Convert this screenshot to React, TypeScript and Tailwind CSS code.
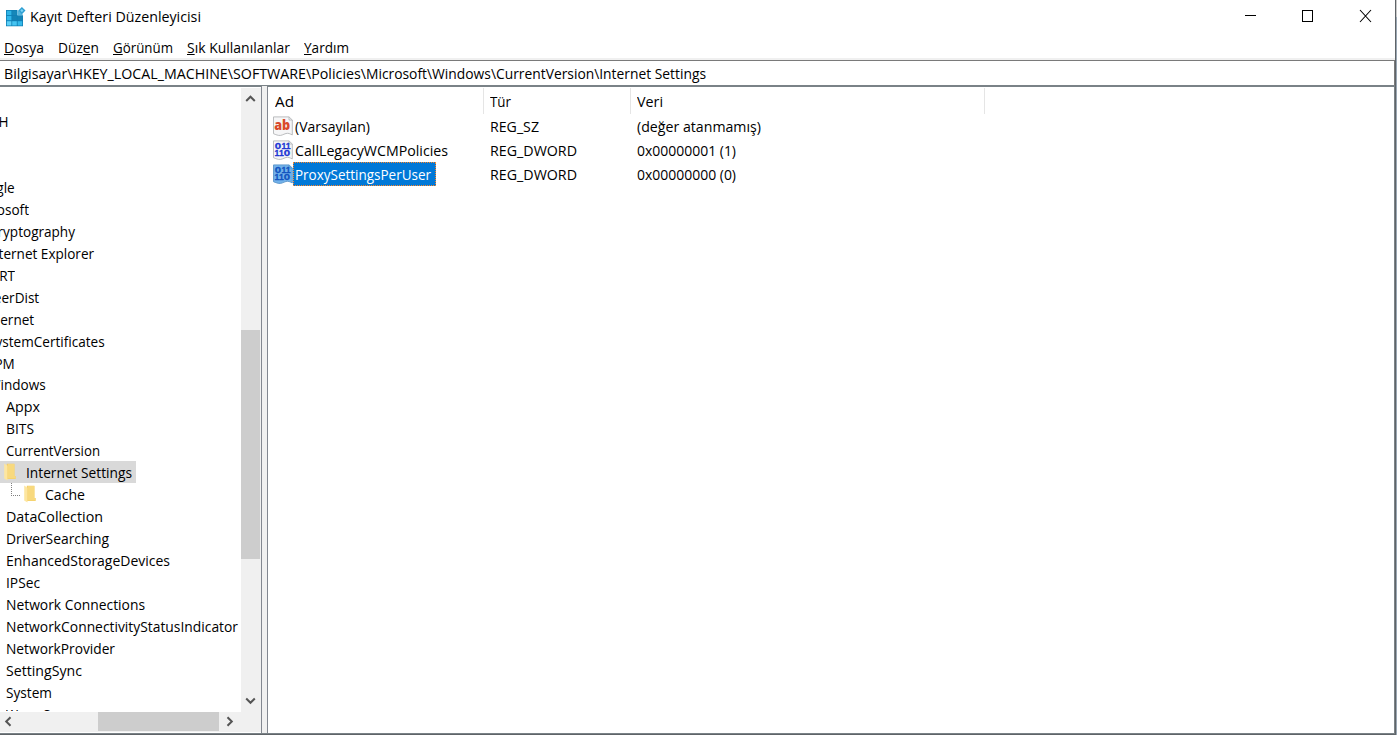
import { useLayoutEffect, useRef, useState } from "react";
import type { ReactNode } from "react";

/** Text stretched horizontally so that it takes exactly `w` pixels. */
function Fit({ w, children }: { w: number; children: ReactNode }) {
  const ref = useRef<HTMLSpanElement>(null);
  const [scale, setScale] = useState(1);
  useLayoutEffect(() => {
    if (ref.current && ref.current.offsetWidth) {
      setScale(w / ref.current.getBoundingClientRect().width);
    }
  }, []);
  return (
    <span className="block shrink-0" style={{ width: w }}>
      <span
        ref={ref}
        className="inline-block origin-left whitespace-nowrap"
        style={{ transform: `scaleX(${scale})` }}
      >
        {children}
      </span>
    </span>
  );
}

function AppIcon() {
  return (
    <svg width="20" height="20" viewBox="0 0 20 20" className="shrink-0">
      <path d="M0 3H11.4V8.3H17V19.2H0z" fill="#0f7fb5" />
      <rect x="0.8" y="3.8" width="4.6" height="4.2" fill="#2fb4e6" />
      <rect x="6.2" y="3.8" width="4.5" height="4.2" fill="#1787b8" />
      <rect x="0.8" y="8.9" width="4.6" height="4.4" fill="#31b7ea" />
      <rect x="6.2" y="8.9" width="4.6" height="4.4" fill="#1583b5" />
      <rect x="11.6" y="8.9" width="4.6" height="4.4" fill="#1583b5" />
      <rect x="0.8" y="14.2" width="4.6" height="4.3" fill="#5ed0f7" />
      <rect x="6.2" y="14.2" width="4.6" height="4.3" fill="#46c5f2" />
      <rect x="11.6" y="14.2" width="4.6" height="4.3" fill="#35b9ea" />
      <path d="M11.4 3.4H13L16.6 7V8.3H11.4z" fill="#56b6de" />
      <path d="M15.9 0l3.6 3.6-3.6 3.6-3.6-3.6z" fill="#2e9fd2" />
      <path d="M15.9 2l1.6 1.6-1.6 1.6-1.6-1.6z" fill="#7fd4f5" />
    </svg>
  );
}

function ValueIcon({ kind, selected }: { kind: "sz" | "dword"; selected?: boolean }) {
  const paper = selected ? "#72b2ea" : "#f6f6f7";
  const edge = selected ? "#5a94c9" : "#b3b5b8";
  const ink = selected ? "#1254c0" : "#2338d4";
  return (
    <svg width="20" height="20" viewBox="0 0 20 20" className="shrink-0">
      <path
        d="M0.5 0.9H16L19.3 4V18.9C17 17.9 15.5 16.8 13 17.5C10 18.3 8.5 19.9 5.5 19.4C3.5 19 2 18.3 0.5 17.7Z"
        fill={paper}
        stroke={edge}
        strokeWidth="0.9"
      />
      <path d="M16 0.9V4H19.3" fill="none" stroke={edge} strokeWidth="0.8" />
      {kind === "sz" ? (
        <text x="1.2" y="13.6" fontFamily="Open Sans, sans-serif" fontWeight="800" fontSize="14" textLength="16" lengthAdjust="spacingAndGlyphs" fill="#d9492b">
          ab
        </text>
      ) : (
        <g fill={ink} stroke={ink} strokeWidth="0.3" fontFamily="Liberation Sans, sans-serif" fontWeight="700" fontSize="8.6">
          <text x="1.8" y="8.8" textLength="6.4" lengthAdjust="spacingAndGlyphs">0</text>
          <text x="8.4 12.8" y="8.8">11</text>
          <text x="1.6 6" y="16.4">11</text>
          <text x="10.8" y="16.4" textLength="6.4" lengthAdjust="spacingAndGlyphs">0</text>
        </g>
      )}
    </svg>
  );
}

function Folder() {
  return (
    <svg width="12" height="18" viewBox="0 0 12 18" className="shrink-0">
      <path d="M2.8 0.8H10.4V13H11.6V16H2.8z" fill="#f3cc62" />
      <path d="M3.8 1H10.4V13H11.6V15.6H3.8z" fill="#f8d97e" />
      <path d="M0.2 0.6L3.5 2.8V17.6L0.2 15.4z" fill="#fde6a0" />
    </svg>
  );
}

function Chevron({ dir }: { dir: "up" | "down" | "left" | "right" }) {
  const d = {
    up: "M1.2 8L5.5 3.7L9.8 8",
    down: "M1.2 3.5L5.5 7.8L9.8 3.5",
    left: "M7.5 1.2L3.2 5.5L7.5 9.8",
    right: "M3.5 1.2L7.8 5.5L3.5 9.8",
  }[dir];
  return (
    <svg width="11" height="11" viewBox="0 0 11 11">
      <path d={d} fill="none" stroke="#555" strokeWidth="2" />
    </svg>
  );
}

const cutRows = [
  { t: "SSH", end: 9 },
  { t: "", end: 0 },
  { t: "", end: 0 },
  { t: "Google", end: 15 },
  { t: "Microsoft", end: 29 },
  { t: "Cryptography", end: 75 },
  { t: "Internet Explorer", end: 94 },
  { t: "MRT", end: 15 },
  { t: "PeerDist", end: 39 },
  { t: "Peernet", end: 34 },
  { t: "SystemCertificates", end: 105 },
  { t: "TPM", end: 15 },
  { t: "Windows", end: 46 },
];

const upperRows = [
  { t: "Appx", w: 34 },
  { t: "BITS", w: 28 },
  { t: "CurrentVersion", w: 94 },
];

const lowerRows = [
  { t: "DataCollection", w: 97 },
  { t: "DriverSearching", w: 103 },
  { t: "EnhancedStorageDevices", w: 164 },
  { t: "IPSec", w: 34 },
  { t: "Network Connections", w: 139 },
  { t: "NetworkConnectivityStatusIndicator", w: 232 },
  { t: "NetworkProvider", w: 109 },
  { t: "SettingSync", w: 76 },
  { t: "System", w: 46 },
  { t: "WwanSvc", w: 57 },
];

function TreeRow({ t, w }: { t: string; w: number }) {
  return (
    <div className="flex h-[22px] shrink-0 items-center pl-[6px] pt-[2px]">
      <Fit w={w}>{t}</Fit>
    </div>
  );
}

function Tree() {
  return (
    <div className="flex h-[624px] w-[241px] flex-col overflow-hidden bg-white pt-[23px]">
      {cutRows.map((r, i) => (
        <div
          key={i}
          className={`flex shrink-0 items-center justify-end pt-[2px] ${i === 11 ? "h-[21px]" : "h-[22px]"}`}
          style={{ width: r.end }}
        >
          <span className="shrink-0 origin-right scale-x-[0.935] whitespace-nowrap">{r.t}</span>
        </div>
      ))}
      {upperRows.map((r) => (
        <TreeRow key={r.t} t={r.t} w={r.w} />
      ))}
      <div className="flex h-[22px] w-[136px] shrink-0 items-center bg-[#d9d9d9] pl-[4px]">
        <Folder />
        <div className="pl-[10px] pt-[2px]">
          <Fit w={106}>Internet Settings</Fit>
        </div>
      </div>
      <div className="flex h-[22px] shrink-0 items-center pl-[11px]">
        <div className="mb-[9px] h-[13px] w-[9px] border-b border-l border-dotted border-[#808080]" />
        <div className="flex items-center pl-[4px]">
          <Folder />
          <div className="pl-[9px] pt-[2px]">
            <Fit w={40}>Cache</Fit>
          </div>
        </div>
      </div>
      {lowerRows.map((r) => (
        <TreeRow key={r.t} t={r.t} w={r.w} />
      ))}
    </div>
  );
}

const values = [
  { name: "(Varsayılan)", nw: 75, type: "REG_SZ", tw: 49, data: "(değer atanmamış)", dw: 124, kind: "sz" as const },
  { name: "CallLegacyWCMPolicies", nw: 153, type: "REG_DWORD", tw: 87, data: "0x00000001 (1)", dw: 99, kind: "dword" as const },
  { name: "ProxySettingsPerUser", nw: 136, type: "REG_DWORD", tw: 87, data: "0x00000000 (0)", dw: 99, kind: "dword" as const, selected: true },
];

function ValueList() {
  return (
    <div className="flex-1 border-l border-[#828790] bg-white">
      <div className="mt-px flex h-[26px] items-center">
        <div className="flex h-full w-[216px] items-center border-r border-[#e5e5e5] pl-[7px] pt-[2px]">
          <Fit w={19}>Ad</Fit>
        </div>
        <div className="flex h-full w-[147px] items-center border-r border-[#e5e5e5] pl-[6px] pt-[2px]">
          <Fit w={21}>Tür</Fit>
        </div>
        <div className="flex h-full w-[354px] items-center border-r border-[#e5e5e5] pl-[6px] pt-[2px]">
          <Fit w={26}>Veri</Fit>
        </div>
      </div>
      {values.map((v) => (
        <div key={v.name} className="flex h-6 items-center">
          <div className="flex h-full w-[216px] items-center pl-[5px]">
            <ValueIcon kind={v.kind} selected={v.selected} />
            <div
              className={
                v.selected
                  ? "flex h-full items-center border border-dotted border-[#ff8728] bg-[#0078d7] pl-px pr-[4px] pt-[2px] text-white"
                  : "flex h-full items-center border border-transparent pl-px pt-[2px]"
              }
            >
              <Fit w={v.nw}>{v.name}</Fit>
            </div>
          </div>
          <div className="w-[147px] pl-[6px] pt-[2px]">
            <Fit w={v.tw}>{v.type}</Fit>
          </div>
          <div className="pl-[6px] pt-[2px]">
            <Fit w={v.dw}>{v.data}</Fit>
          </div>
        </div>
      ))}
    </div>
  );
}

export default function App() {
  return (
    <div className="flex h-[735px] w-[1397px] overflow-hidden bg-white font-['Open_Sans','Noto_Sans',sans-serif] text-[14.5px] leading-[22px] text-black">
      <div className="flex w-[1395px] flex-col">
        <header className="flex h-[34px] items-center">
          <div className="flex flex-1 items-center pl-[6px]">
            <AppIcon />
            <div className="pl-[4px]">
              <Fit w={171}>Kayıt Defteri Düzenleyicisi</Fit>
            </div>
          </div>
          <svg width="160" height="34" viewBox="0 0 160 34" fill="none" stroke="#000" shapeRendering="crispEdges" className="shrink-0">
            <path d="M10 15.5H21" />
            <rect x="67.5" y="10.5" width="10" height="11" />
            <path d="M125 10L136 22M136 10L125 22" shapeRendering="auto" strokeWidth="1.1" />
          </svg>
        </header>
        <nav className="flex h-[24px] items-center gap-[14px] pb-px pl-[4px] pt-[4px]">
          <Fit w={40}><u>D</u>osya</Fit>
          <Fit w={41}>Düz<u>e</u>n</Fit>
          <Fit w={60}><u>G</u>örünüm</Fit>
          <Fit w={103}><u>S</u>ık Kullanılanlar</Fit>
          <Fit w={45}><u>Y</u>ardım</Fit>
        </nav>
        <div className="h-[2px] bg-[#f0f0f0]" />
        <div className="flex h-[25px] items-center border-r border-t border-[#7a7a7a] pl-[4px] pt-px">
          <Fit w={229}>{"Bilgisayar\\HKEY_LOCAL_MACHINE\\"}</Fit>
          <Fit w={133}>{"SOFTWARE\\Policies\\"}</Fit>
          <Fit w={340}>{"Microsoft\\Windows\\CurrentVersion\\Internet Settings"}</Fit>
        </div>
        <div className="flex h-[649px] border-b border-r border-t border-[#7a8287]">
          <div className="flex w-[262px] shrink-0 flex-col border-r border-t border-r-[#828790] border-t-[#7a8287] pb-px">
            <div className="flex h-[625px] shrink-0">
              <Tree />
              <div className="mt-px flex w-[20px] flex-col items-center bg-[#f0f0f0]">
                <div className="mr-px flex h-[242px] items-start pt-[5px]">
                  <Chevron dir="up" />
                </div>
                <div className="mr-px h-[229px] w-[19px] bg-[#cdcdcd]" />
                <div className="mr-px flex flex-1 items-end pb-[6px]">
                  <Chevron dir="down" />
                </div>
              </div>
            </div>
            <div className="flex h-[20px] shrink-0 items-center bg-[#f0f0f0]">
              <div className="w-[98px] pb-px pl-[3px]">
                <Chevron dir="left" />
              </div>
              <div className="mb-px h-[19px] w-[121px] bg-[#cdcdcd]" />
              <div className="pb-px pl-[5px]">
                <Chevron dir="right" />
              </div>
            </div>
          </div>
          <div className="w-[5px] shrink-0 bg-[#f0f0f0]" />
          <div className="flex flex-1 border-t border-[#7a8287]">
            <ValueList />
          </div>
        </div>
        <div className="h-px bg-[#5f6468]" />
      </div>
      <div className="w-px bg-[#5f6468]" />
      <div className="flex w-px flex-col">
        <div className="h-[17px] bg-[#c8c8c8]" />
        <div className="flex-1 bg-[#9aa7b4]" />
      </div>
    </div>
  );
}
